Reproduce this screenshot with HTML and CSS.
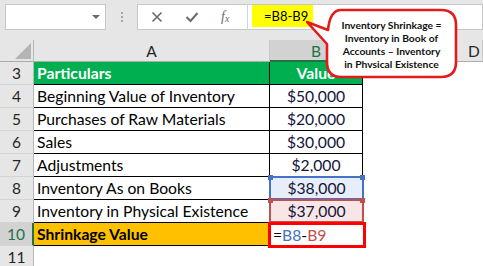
FILE: index.html
```html
<!DOCTYPE html>
<html>
<head>
<meta charset="utf-8">
<link rel="stylesheet" href="styles.css">
</head>
<body>
<div class="app">
  <div class="toolbar">
    <div class="namebox"><span class="caret"></span></div>
    <div class="grip"><i></i><i></i><i></i></div>
    <div class="fbtns">
      <svg class="ico" width="12" height="12" viewBox="0 0 12 12"><path d="M1.5 1.5 L10.5 10.5 M10.5 1.5 L1.5 10.5" stroke="#6b6b6b" stroke-width="1.6" fill="none"/></svg>
      <svg class="ico" width="14" height="12" viewBox="0 0 14 12"><path d="M1.5 6 L5.5 10 L12.5 2" stroke="#6b6b6b" stroke-width="2" fill="none"/></svg>
      <span class="fx">f<sub>x</sub></span>
    </div>
    <div class="finput"><span class="formula">=B8-B9</span></div>
  </div>

  <div class="sheet">
    <div class="corner"><span class="tri"></span></div>
    <div class="colh">A</div>
    <div class="colh sel">B</div>
    <div class="colh"></div>
    <div class="colh last">D</div>

    <div class="rowh">3</div><div class="c hdr">Particulars</div><div class="c hdr num">Value</div><div class="c blank"></div><div class="c blank"></div>
    <div class="rowh">4</div><div class="c">Beginning Value of Inventory</div><div class="c num">$50,000</div><div class="c blank"></div><div class="c blank"></div>
    <div class="rowh">5</div><div class="c">Purchases of Raw Materials</div><div class="c num">$20,000</div><div class="c blank"></div><div class="c blank"></div>
    <div class="rowh">6</div><div class="c">Sales</div><div class="c num">$30,000</div><div class="c blank"></div><div class="c blank"></div>
    <div class="rowh">7</div><div class="c">Adjustments</div><div class="c num">$2,000</div><div class="c blank"></div><div class="c blank"></div>
    <div class="rowh">8</div><div class="c">Inventory As on Books</div><div class="c num ref blue"><span class="h tl"></span><span class="h tr"></span>$38,000</div><div class="c blank"></div><div class="c blank"></div>
    <div class="rowh">9</div><div class="c">Inventory in Physical Existence</div><div class="c num ref red"><span class="h tl"></span><span class="h tr"></span>$37,000</div><div class="c blank"></div><div class="c blank"></div>
    <div class="rowh selr">10</div><div class="c tot">Shrinkage Value</div><div class="c active">=<span class="rb">B8</span>-<span class="rr">B9</span></div><div class="c blank"></div><div class="c blank"></div>
    <div class="rowh">11</div><div class="c empty"></div><div class="c empty"></div><div class="c blank"></div><div class="c blank"></div>
  </div>

  <div class="callout">
    <svg class="bubble" width="160" height="80" viewBox="0 0 160 80">
      <path d="M35 10 H135 Q150 10 150 25 V62 Q150 77 135 77 H35 Q21 77 21 62 V44 L1 22 L22 30 Q24 10 35 10 Z" fill="#fff" stroke="#e31b1b" stroke-width="2.6" stroke-linejoin="round"/>
    </svg>
    <div class="ctext">Inventory Shrinkage =<br>Inventory in Book of<br>Accounts – Inventory<br>in Phvsical Existence</div>
  </div>
</div>
</body>
</html>
```
FILE: styles.css
```css
html, body { margin: 0; padding: 0; }
body { width: 483px; height: 266px; overflow: hidden; background: #fff; font-family: Lato, "Open Sans", sans-serif; }
.app { position: relative; width: 483px; height: 266px; overflow: hidden; }

.toolbar { height: 40px; background: #e6e6e6; display: flex; align-items: flex-start; padding-top: 4px; box-sizing: border-box; }
.namebox { margin-left: 5px; width: 101px; height: 26px; box-sizing: border-box; background: #fff; border: 1px solid #c6c6c6; display: flex; align-items: center; justify-content: flex-end; padding-right: 5px; }
.caret { width: 0; height: 0; border-left: 4px solid transparent; border-right: 4px solid transparent; border-top: 4px solid #6b6b6b; }
.grip { width: 31px; height: 26px; display: flex; flex-direction: column; align-items: center; justify-content: center; gap: 2px; }
.grip i { width: 2px; height: 2px; background: #a6a6a6; display: block; }
.fbtns { width: 110px; height: 26px; box-sizing: border-box; background: #fff; border: 1px solid #c6c6c6; border-right: none; display: flex; align-items: center; padding-left: 13px; gap: 22px; }
.fx { font-family: "Liberation Serif", serif; font-style: italic; color: #6b6b6b; font-size: 14px; line-height: 1; }
.fx sub { font-size: 10px; vertical-align: -1px; }
.finput { flex: 1; height: 26px; box-sizing: border-box; background: #fff; border: 1px solid #c6c6c6; border-left: 1px solid #d4d4d4; padding-left: 4px; white-space: nowrap; }
.formula { display: inline-block; white-space: nowrap; background: #ffff00; height: 22px; margin-top: -2px; line-height: 23px; padding: 0 5px 0 12px; font-size: 13px; color: #000; }

.sheet { display: grid; grid-template-columns: 34px 236px 93px 93px 1fr; grid-template-rows: 22px repeat(9, 23px); }
.corner { background: #e6e6e6; border-right: 1px solid #b8b8b8; border-bottom: 1px solid #ababab; position: relative; }
.tri { position: absolute; right: 2px; bottom: 2px; width: 0; height: 0; border-left: 16px solid transparent; border-bottom: 16px solid #b4b4b4; }
.colh { background: #e6e6e6; border-right: 1px solid #c8c8c8; border-bottom: 1px solid #ababab; font-size: 15.5px; color: #262626; display: flex; align-items: center; justify-content: center; padding-top: 1px; box-sizing: border-box; }
.colh.sel { background: #d2d2d2; color: #217346; border-bottom: 2px solid #217346; }
.colh.last { justify-content: flex-start; padding-left: 12px; color: #262626; }
.rowh { background: #e6e6e6; border-right: 1px solid #b8b8b8; border-bottom: 1px solid #d4d4d4; font-size: 15.5px; color: #262626; display: flex; align-items: center; justify-content: center; box-sizing: border-box; }
.rowh.selr { background: #d2d2d2; color: #217346; border-right: 2px solid #217346; }

.c { box-sizing: border-box; border-right: 1px solid #000; border-bottom: 1px solid #000; font-size: 15.7px; color: #000; padding-left: 3px; display: flex; align-items: center; white-space: nowrap; }
.c.num { justify-content: center; color: #14143a; padding-left: 0; }
.c.hdr { background: #00b050; color: #fff; font-weight: 700; }
.c.hdr.num { color: #fff; }
.c.tot { background: #ffc000; font-weight: 700; }
.c.blank { border: none; }
.c.empty { border-right: none; border-bottom: none; }
.c.ref { position: relative; border: 2px solid; margin: -1px -1px 0 -1px; }
.c.ref.blue { border-color: #4472c4; background: #e7eef9; }
.c.ref.red { border-color: #c0504d; background: #f8e6e6; }
.h { position: absolute; width: 5px; height: 5px; top: -3px; }
.blue .h { background: #4472c4; }
.red .h { background: #c0504d; }
.h.tl { left: -3px; }
.h.tr { right: -3px; }
.c.active { border: 3px solid #ff0000; margin: -1px -3px -2px -2px; padding-left: 2px; position: relative; background: #fff; }
.rb { color: #4472c4; }
.rr { color: #c0504d; }

.callout { position: absolute; left: 306px; top: 0; width: 160px; height: 80px; }
.bubble { position: absolute; left: 0; top: 0; }
.ctext { position: absolute; left: 21px; top: 19px; width: 129px; text-align: center; font-size: 10.3px; line-height: 13px; font-weight: 700; color: #111; }
```
